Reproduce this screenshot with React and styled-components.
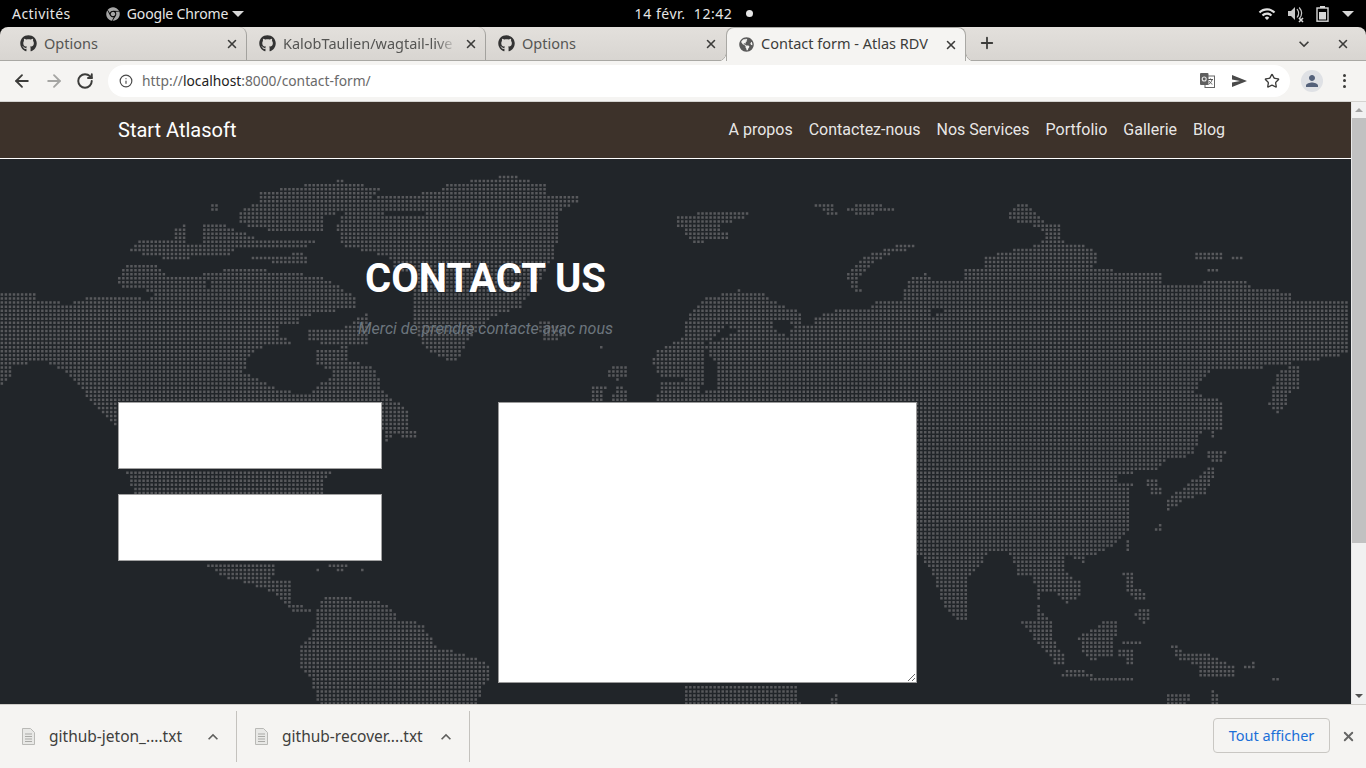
import React, { useMemo } from "react";
import styled, { createGlobalStyle } from "styled-components";
import { FaGithub, FaGlobeAmericas, FaChrome } from "react-icons/fa";
import { MdWifi, MdPerson, MdKeyboardArrowDown, MdKeyboardArrowUp } from "react-icons/md";
import { ArrowLeft, ArrowRight, RotateCw, Info, Star, X, Plus } from "lucide-react";

const GlobalStyle = createGlobalStyle`
  html, body {
    margin: 0;
    height: 100%;
    overflow: hidden;
    background: #000;
  }
  * { box-sizing: border-box; }
`;

const uiFont = `"Noto Sans", "Open Sans", sans-serif`;
const pageFont = `Roboto, "Liberation Sans", sans-serif`;

/* ---------- desktop bar ---------- */

const Screen = styled.div`
  width: 1366px;
  height: 768px;
  display: flex;
  flex-direction: column;
  font-family: ${uiFont};
`;

const TopBar = styled.div`
  height: 27px;
  flex: none;
  background: #000;
  color: #e6e6e6;
  font-size: 14px;
  display: grid;
  grid-template-columns: 1fr auto 1fr;
  align-items: center;
  padding: 0 12px;
`;

const TopLeft = styled.div`
  display: flex;
  align-items: center;
`;

const Activities = styled.span`
  letter-spacing: 0.45px;
`;

const AppName = styled.div`
  display: flex;
  align-items: center;
  gap: 7px;
  margin-left: 35px;
  letter-spacing: -0.15px;
`;

const Caret = styled.span`
  width: 0;
  height: 0;
  border-left: 6px solid transparent;
  border-right: 6px solid transparent;
  border-top: 6px solid #d8d8d8;
  margin-left: ${(p) => p.$gap || 0}px;
`;

const Clock = styled.div`
  display: flex;
  align-items: center;
  margin-left: 22px;
  gap: 14px;
  letter-spacing: 0.55px;
`;

const ClockDot = styled.span`
  width: 7px;
  height: 7px;
  border-radius: 50%;
  background: #e6e6e6;
`;

const TopRight = styled.div`
  display: flex;
  align-items: center;
  justify-content: flex-end;
  gap: 11px;
`;

/* ---------- chrome tabs ---------- */

const TabStrip = styled.div`
  height: 34px;
  flex: none;
  position: relative;
  display: flex;
  padding-left: 8px;
  background: linear-gradient(#e3e0dc, #d8d5d1);
  border-bottom: 1px solid #a9a8a4;
  border-radius: 8px 8px 0 0;
  color: #4a4a48;
  font-size: 14.5px;
`;

const Tab = styled.div`
  width: ${(p) => (p.$active ? 240 : 239)}px;
  height: ${(p) => (p.$active ? 34 : 33)}px;
  position: relative;
  display: flex;
  align-items: center;
  padding: 0 7px 0 12px;
  gap: 7px;
  color: ${(p) => (p.$active ? "#3c3c3a" : "#555553")};
  background: ${(p) => (p.$active ? "#f5f4f2" : "transparent")};
  border-radius: 8px 8px 0 0;
  border: ${(p) => (p.$active ? "1px solid #a9a8a4" : "none")};
  border-bottom: none;
  border-right: ${(p) =>
    p.$active ? "1px solid #a9a8a4" : p.$sep ? "1px solid #a3a29e" : "none"};
  margin-left: ${(p) => (p.$active ? 1 : 0)}px;

  ${(p) =>
    p.$active &&
    `
    &::before, &::after {
      content: "";
      position: absolute;
      bottom: 0;
      width: 8px;
      height: 8px;
    }
    &::before {
      left: -9px;
      background: radial-gradient(circle at 0 0, transparent 7.5px, #a9a8a4 8px, #f5f4f2 8.6px);
    }
    &::after {
      right: -9px;
      background: radial-gradient(circle at 100% 0, transparent 7.5px, #a9a8a4 8px, #f5f4f2 8.6px);
    }
  `}
`;

const TabTitle = styled.span`
  flex: 1;
  min-width: 0;
  padding-bottom: ${(p) => (p.$raised ? 4 : 2)}px;
  white-space: nowrap;
  overflow: hidden;
  -webkit-mask-image: ${(p) =>
    p.$fade ? "linear-gradient(to right, #000 88%, transparent 100%)" : "none"};
`;

const TabClose = styled(X)`
  flex: none;
  width: 14px;
  height: 14px;
  color: #3c3c3a;
  stroke-width: 2.6;
`;

const NewTab = styled(Plus)`
  width: 18px;
  height: 18px;
  margin: 7px 0 0 12px;
  color: #3c3c3a;
  stroke-width: 2.4;
`;

const StripRight = styled.div`
  margin-left: auto;
  display: flex;
  align-items: center;
  gap: 22px;
  padding-right: 16px;
  color: #3c3c3a;
`;

/* ---------- toolbar ---------- */

const Toolbar = styled.div`
  height: 41px;
  flex: none;
  display: flex;
  align-items: center;
  background: #f5f4f2;
  border-bottom: 1px solid #d4d3d0;
  padding: 0 0 1px 12px;
`;

const NavButtons = styled.div`
  display: flex;
  align-items: center;
  gap: 12px;
  width: 96px;
`;

const UrlBar = styled.div`
  width: 1182px;
  height: 32px;
  border-radius: 16px;
  background: #fff;
  display: flex;
  align-items: center;
  padding: 0 10px 0 11px;
  font-size: 13.8px;
  color: #6a6a6a;
`;

const UrlText = styled.span`
  margin-left: 9px;
  flex: 1;
  b {
    font-weight: 400;
    color: #222;
  }
`;

const UrlActions = styled.div`
  display: flex;
  align-items: center;
  gap: 17px;
  color: #4a4a4a;
`;

const Avatar = styled.div`
  width: 22px;
  height: 22px;
  margin-left: 11px;
  border-radius: 50%;
  background: #dfe1e5;
  color: #54617a;
  display: flex;
  align-items: center;
  justify-content: center;
`;

const Kebab = styled.div`
  margin-left: 20px;
  display: flex;
  flex-direction: column;
  gap: 2.5px;
  span {
    width: 3px;
    height: 3px;
    border-radius: 50%;
    background: #3c3c3a;
  }
`;

/* ---------- web page ---------- */

const Viewport = styled.div`
  flex: 1;
  min-height: 0;
  display: flex;
`;

const Page = styled.div`
  flex: 1;
  min-width: 0;
  display: flex;
  flex-direction: column;
  font-family: ${pageFont};
`;

const Navbar = styled.nav`
  height: 57px;
  flex: none;
  display: flex;
  align-items: center;
  justify-content: space-between;
  padding: 0 126px 0 118px;
  background: #3d322a;
  border-bottom: 1px solid #fff;
  color: #fff;
`;

const Brand = styled.div`
  font-size: 20px;
`;

const NavLinks = styled.div`
  display: flex;
  gap: 16px;
  padding-bottom: 2px;
  font-size: 16px;
  color: rgba(255, 255, 255, 0.9);
`;

const Hero = styled.section`
  flex: 1;
  min-height: 0;
  position: relative;
  overflow: hidden;
  background: #212529;
  padding: 0 0 0 118px;
`;

const MapLayer = styled.svg`
  position: absolute;
  left: 0;
  top: 0;
  width: 1351px;
  height: 545px;
`;

const Heading = styled.div`
  position: relative;
  width: 735px;
  padding-top: 96px;
  text-align: center;
`;

const Title = styled.h1`
  margin: 0;
  font-size: 40px;
  line-height: 48px;
  font-weight: 700;
  color: #fff;
`;

const Subtitle = styled.p`
  margin: 14px 0 0;
  font-size: 16px;
  line-height: 24px;
  font-style: italic;
  color: #6c757d;
`;

const FormGrid = styled.form`
  position: relative;
  margin-top: 61px;
  display: grid;
  grid-template-columns: 264px 419px;
  column-gap: 116px;
`;

const Fields = styled.div`
  display: flex;
  flex-direction: column;
  gap: 25px;
`;

const Field = styled.input`
  display: block;
  width: 264px;
  height: 67px;
  border: 1px solid #a2a2a2;
  background: #fff;
  outline: none;
`;

const Message = styled.textarea`
  display: block;
  width: 419px;
  height: 281px;
  border: 1px solid #9a9a9a;
  background: #fff;
  outline: none;
`;

/* ---------- scrollbar ---------- */

const Scrollbar = styled.div`
  width: 15px;
  flex: none;
  display: flex;
  flex-direction: column;
  background: #f1f1f1;
  border-left: 1px solid #e8e8e8;
`;

const ScrollArrow = styled.div`
  height: 16px;
  flex: none;
  display: flex;
  align-items: center;
  justify-content: center;
  span {
    width: 0;
    height: 0;
    border-left: 4px solid transparent;
    border-right: 4px solid transparent;
    ${(p) => (p.$down ? "border-top: 4px solid #505050;" : "border-bottom: 4px solid #a3a3a3;")}
  }
`;

const ScrollThumb = styled.div`
  height: 425px;
  background: #c1c1c1;
`;

const ScrollTrack = styled.div`
  flex: 1;
`;

/* ---------- downloads ---------- */

const DownloadBar = styled.div`
  height: 64px;
  flex: none;
  display: flex;
  align-items: center;
  background: #f5f4f2;
  border-top: 1px solid #cfcdc9;
  color: #3f3f3d;
  font-size: 15.5px;
`;

const DownloadItem = styled.div`
  width: ${(p) => p.$width}px;
  height: 51px;
  display: flex;
  align-items: center;
  padding-left: ${(p) => p.$pad}px;
  border-right: 1px solid #c4c2be;
`;

const FileName = styled.span`
  margin-left: 14px;
  padding-bottom: 2px;
  flex: 1;
`;

const Chevron = styled(MdKeyboardArrowUp)`
  margin-right: 13px;
  color: #5f5f5d;
`;

const ShowAll = styled.button`
  margin: -2px 0 0 auto;
  width: 117px;
  height: 35px;
  padding: 0 0 2px;
  border: 1px solid #c9c7c3;
  border-radius: 4px;
  background: transparent;
  color: #1a6fd8;
  font-family: ${uiFont};
  font-size: 14.5px;
`;

const BarClose = styled(X)`
  margin: 0 10px 0 11px;
  width: 15px;
  height: 15px;
  color: #666;
  stroke-width: 3;
`;

/* ---------- small drawings ---------- */

const FileIcon = () => (
  <svg width="13" height="17" viewBox="0 0 13 17">
    <path d="M.5.5h8l4 4v12H.5z" fill="#e8e8e6" stroke="#b9b9b6" />
    <path d="M3 6h7M3 8.5h7M3 11h7M3 13.5h7" stroke="#a9a9a6" />
  </svg>
);

const MuteIcon = () => (
  <svg width="18" height="18" viewBox="0 0 18 18" fill="none">
    <path d="M1 6h3l4-4v13l-4-4H1z" fill="#c8c8c8" />
    <path d="M10 4c2 2.5 2 6 0 8.5M12.2 2.5c3 3.5 3 8 0 11.5" stroke="#c8c8c8" strokeWidth="1.2" />
    <path d="M12 13l4 4M16 13l-4 4" stroke="#d8d8d8" strokeWidth="1.6" />
  </svg>
);

const BatteryIcon = () => (
  <svg width="13" height="16" viewBox="0 0 13 16" fill="none">
    <path d="M4 0h5v2H4z" fill="#d8d8d8" />
    <rect x="1" y="2" width="11" height="13.2" stroke="#d8d8d8" strokeWidth="1.4" />
    <rect x="3" y="6" width="7" height="7.5" fill="#d8d8d8" />
  </svg>
);

const TranslateIcon = () => (
  <svg width="15" height="15" viewBox="0 0 15 15">
    <rect x="5" y="3" width="9.5" height="11.5" fill="#fff" stroke="#666" />
    <path d="M8 6.5h5M10.5 5.5v1M12 7c-1 2.5-2 3.5-3.5 4.5M9.2 8.2c1 1.5 2 2.5 3.2 3" stroke="#555" fill="none" />
    <rect x="0" y="0" width="8.5" height="12" rx="1" fill="#5f5f5f" />
    <circle cx="4.2" cy="6" r="2" fill="none" stroke="#e8e8e8" strokeWidth="1.1" />
  </svg>
);

const SendIcon = () => (
  <svg width="15" height="12" viewBox="0 0 15 12">
    <path d="M0 0l15 6-15 6V7.5L8 6 0 4.5z" fill="#4a4a4a" />
  </svg>
);

/* ---------- dotted world map ---------- */

const toPage = (ox, oy) => (pts) => pts.map(([x, y]) => [ox + x / 2.296, oy - 159 + y / 3]);

const topLeft = toPage(0, 160);
const topRight = toPage(683, 160);
const bottomLeft = toPage(0, 430);
const bottomRight = toPage(683, 430);

const land = [
  // greenland
  topLeft([[770,195],[810,130],[870,110],[885,100],[970,100],[975,88],[1010,88],[1020,75],[1085,62],[1160,48],[1185,48],[1215,62],[1260,75],[1250,100],[1333,110],[1333,128],[1290,140],[1280,175],[1278,255],[1270,290],[1250,340],[1225,385],[1195,440],[1135,465],[1085,520],[1065,560],[1050,605],[1030,605],[970,560],[950,480],[945,420],[945,340],[900,325],[895,295],[830,270],[790,265]]),
  // arctic canada
  topLeft([[590,100],[640,88],[690,75],[770,62],[790,62],[875,88],[835,130],[745,170],[745,210],[640,215],[545,190],[545,160],[590,125]]),
  topLeft([[485,135],[505,135],[505,155],[485,155]]),
  topLeft([[460,250],[465,190],[495,185],[545,210],[600,240],[725,245],[690,265],[540,265],[530,285],[450,285],[430,300],[340,290],[298,270],[325,235],[370,235],[395,240],[400,200],[428,195],[425,245]]),
  topLeft([[580,285],[700,280],[705,315],[580,300]]),
  // north america
  topLeft([[0,392],[80,402],[85,418],[160,430],[180,420],[215,405],[285,405],[345,420],[350,395],[275,378],[270,350],[285,320],[280,310],[365,315],[370,340],[420,350],[480,340],[535,320],[610,318],[610,330],[720,345],[770,370],[815,410],[820,440],[690,470],[690,490],[640,495],[640,530],[690,545],[640,555],[600,560],[590,570],[565,600],[560,640],[600,660],[620,680],[660,690],[680,700],[705,700],[770,640],[720,610],[720,570],[780,560],[705,540],[705,510],[780,510],[845,455],[850,560],[800,560],[800,600],[860,625],[880,690],[905,720],[935,745],[935,810],[270,810],[240,770],[200,720],[185,680],[155,640],[100,605],[55,610],[25,615],[25,650],[0,680]]),
  bottomLeft([[895,0],[960,0],[960,30],[905,15],[890,25],[885,50],[878,50],[878,0]]),
  bottomLeft([[290,119],[765,119],[745,150],[745,190],[310,190],[298,160]]),
  bottomLeft([[466,398],[635,398],[625,445],[668,448],[670,495],[660,510],[680,525],[720,535],[715,552],[665,542],[645,510],[635,490],[605,475],[580,465],[555,455],[515,440],[490,420]]),
  bottomLeft([[720,410],[738,410],[738,420],[720,420]]),
  bottomLeft([[755,398],[800,398],[800,408],[755,408]]),
  bottomLeft([[775,410],[792,410],[792,420],[775,420]]),
  bottomLeft([[822,410],[840,410],[840,420],[822,420]]),
  // south america
  bottomLeft([[745,498],[810,498],[810,510],[865,510],[885,522],[905,548],[915,570],[950,572],[970,585],[990,625],[1000,650],[1035,656],[1055,670],[1090,680],[1120,705],[1130,745],[1110,770],[1100,800],[1090,830],[740,830],[720,790],[718,745],[690,710],[682,695],[692,645],[710,620],[730,570],[722,550],[735,525]]),
  // iceland, uk, west of europe
  topLeft([[1230,490],[1260,480],[1300,525],[1270,548],[1250,540]]),
  topLeft([[1372,550],[1382,550],[1382,572],[1372,572]]),
  topLeft([[1456,588],[1464,588],[1464,596],[1456,596]]),
  topLeft([[1420,612],[1435,612],[1445,650],[1415,660],[1392,650],[1395,630]]),
  topLeft([[1360,670],[1390,675],[1385,725],[1355,725]]),
  topLeft([[1410,680],[1435,680],[1445,725],[1405,725]]),
  topLeft([[1510,570],[1568,530],[1568,650],[1520,650],[1495,610]]),
  topLeft([[1520,665],[1550,660],[1568,670],[1568,725],[1505,725]]),
  topLeft([[1550,165],[1568,160],[1568,200],[1552,200]]),
  // svalbard and friends
  topRight([[0,175],[30,160],[50,148],[110,148],[148,160],[130,180],[85,190],[85,205],[110,225],[100,240],[50,240],[45,255],[30,255],[10,240],[0,205]]),
  topRight([[300,135],[345,135],[345,150],[365,165],[335,168],[320,150]]),
  topRight([[375,150],[405,125],[438,125],[495,150],[440,155],[435,168],[405,168]]),
  topRight([[375,345],[395,320],[420,285],[470,265],[505,245],[532,245],[530,265],[480,280],[450,300],[425,320],[405,350],[400,375],[420,395],[400,400],[385,385]]),
  topRight([[750,150],[780,125],[800,150],[830,185],[875,200],[815,200],[795,195],[750,180]]),
  topRight([[1170,270],[1235,270],[1240,300],[1170,300]]),
  topRight([[1250,285],[1280,285],[1295,300],[1260,300]]),
  topRight([[1198,320],[1225,322],[1230,340],[1205,340]]),
  // russia and asia, top half
  topRight([[0,490],[20,450],[45,415],[85,405],[120,390],[175,392],[220,430],[270,455],[270,490],[295,490],[300,470],[350,450],[430,440],[445,415],[505,415],[510,380],[530,345],[560,340],[575,360],[640,365],[640,320],[690,320],[690,295],[750,270],[815,255],[835,225],[815,200],[875,200],[860,225],[885,250],[945,260],[950,310],[930,325],[1100,340],[1105,375],[1200,378],[1195,365],[1280,355],[1305,378],[1390,395],[1400,415],[1532,415],[1532,570],[1500,590],[1340,620],[1300,625],[1220,625],[1190,660],[1170,700],[1235,720],[1240,812],[0,812]]),
  topRight([[1350,690],[1365,640],[1400,610],[1420,625],[1415,680],[1385,700],[1390,730],[1360,765],[1345,730]]),
  // asia, bottom half
  bottomRight([[0,0],[1190,0],[1185,40],[1165,75],[1100,95],[1090,120],[1010,130],[990,150],[1035,165],[1025,180],[1025,290],[1005,325],[980,355],[950,370],[925,375],[920,400],[880,375],[875,420],[915,460],[915,495],[880,520],[860,490],[825,490],[825,520],[810,510],[805,440],[770,440],[750,370],[700,365],[690,400],[650,440],[655,565],[630,565],[610,540],[600,530],[580,460],[570,420],[545,380],[0,380]]),
  bottomRight([[1215,0],[1222,0],[1222,30],[1215,30]]),
  bottomRight([[1205,60],[1250,60],[1245,75],[1230,100],[1200,85]]),
  bottomRight([[1200,105],[1220,105],[1222,135],[1210,145],[1212,160],[1200,190],[1145,210],[1110,250],[1105,220],[1125,190],[1150,170],[1170,150],[1195,125]]),
  bottomRight([[1060,145],[1090,150],[1100,185],[1090,200],[1075,195]]),
  bottomRight([[1095,280],[1102,280],[1100,295],[1085,310],[1078,322],[1075,315]]),
  bottomRight([[1015,325],[1027,325],[1027,370],[1018,360]]),
  bottomRight([[1010,420],[1035,425],[1035,470],[1060,485],[1062,505],[1040,515],[1015,480]]),
  bottomRight([[1030,545],[1070,530],[1075,555],[1060,580],[1050,570]]),
  bottomRight([[810,515],[825,545],[850,575],[850,615],[855,640],[878,680],[878,710],[860,708],[825,660],[805,625],[795,600],[775,575],[795,570],[815,570]]),
  bottomRight([[965,572],[1000,572],[990,640],[985,680],[935,690],[915,660],[908,620],[930,605]]),
  bottomRight([[1010,632],[1055,632],[1058,640],[1010,640]]),
  bottomRight([[1000,660],[1035,655],[1035,700],[1005,712],[1020,680],[995,675]]),
  bottomRight([[1115,645],[1140,645],[1145,670],[1200,668],[1240,695],[1270,715],[1260,745],[1180,745],[1180,700],[1140,695],[1130,670]]),
  bottomRight([[870,730],[885,718],[905,718],[940,730],[940,740],[1035,742],[1035,750],[935,748],[870,738]]),
  bottomRight([[1105,790],[1165,790],[1155,830],[1105,830]]),
  bottomRight([[1215,770],[1232,800],[1232,830],[1215,830]]),
  bottomRight([[1285,705],[1315,695],[1310,712],[1285,712]]),
  bottomRight([[1355,742],[1370,742],[1370,748],[1355,748]]),
  bottomRight([[0,762],[260,762],[270,830],[0,830]]),
  bottomRight([[345,790],[355,790],[355,830],[330,830]]),
];

const seas = [
  topRight([[45,550],[70,545],[125,510],[100,498],[70,530],[45,560],[50,650],[40,700],[80,680],[75,610]]),
  topRight([[205,480],[260,490],[240,525],[210,510]]),
  topRight([[100,610],[150,610],[150,620],[100,620]]),
  topRight([[560,480],[575,440],[610,440],[570,470]]),
  // straits through the canadian islands, kept thin
  topLeft([[400,340],[420,340],[420,350],[400,350]]),
  topLeft([[600,330],[606,330],[606,400],[600,400]]),
  topLeft([[470,345],[476,345],[486,400],[480,400]]),
  topLeft([[880,160],[1000,150],[1000,158],[880,168]]),
];

const inside = (poly, x, y) => {
  let hit = false;
  for (let i = 0, j = poly.length - 1; i < poly.length; j = i++) {
    const [xi, yi] = poly[i];
    const [xj, yj] = poly[j];
    if (yi > y !== yj > y && x < ((xj - xi) * (y - yi)) / (yj - yi) + xi) hit = !hit;
  }
  return hit;
};

const PITCH = 4.05;

function DotMap() {
  const dots = useMemo(() => {
    let d = "";
    for (let row = 0; row * PITCH < 545; row++) {
      for (let col = 0; col * PITCH < 1351; col++) {
        const x = col * PITCH + 0.6;
        const y = row * PITCH + 0.6;
        if (land.some((p) => inside(p, x + 1, y + 1)) && !seas.some((p) => inside(p, x + 1, y + 1))) {
          d += `M${x.toFixed(2)} ${y.toFixed(2)}h2.5v2.5h-2.5z`;
        }
      }
    }
    return d;
  }, []);

  return (
    <MapLayer viewBox="0 0 1351 545">
      <path d={dots} fill="#58595c" />
    </MapLayer>
  );
}

const tabs = [
  { title: "Options", sep: true },
  { title: "KalobTaulien/wagtail-live", sep: true, fade: true },
  { title: "Options" },
];

const links = ["A propos", "Contactez-nous", "Nos Services", "Portfolio", "Gallerie", "Blog"];

export default function App() {
  return (
    <Screen>
      <GlobalStyle />
      <TopBar>
        <TopLeft>
          <Activities>Activités</Activities>
          <AppName>
            <FaChrome size={14} color="#a5a5a5" />
            Google Chrome
            <Caret $gap={-3} />
          </AppName>
        </TopLeft>
        <Clock>
          <span>14 févr.&nbsp; 12:42</span>
          <ClockDot />
        </Clock>
        <TopRight>
          <MdWifi size={18} color="#e0e0e0" />
          <MuteIcon />
          <BatteryIcon />
          <Caret $gap={2} />
        </TopRight>
      </TopBar>

      <TabStrip>
        {tabs.map((t, i) => (
          <Tab key={i} $sep={t.sep}>
            <FaGithub size={17} color="#333" />
            <TabTitle $fade={t.fade}>{t.title}</TabTitle>
            <TabClose />
          </Tab>
        ))}
        <Tab $active>
          <FaGlobeAmericas size={15} color="#5a5a5a" />
          <TabTitle $raised>Contact form - Atlas RDV</TabTitle>
          <TabClose />
        </Tab>
        <NewTab />
        <StripRight>
          <MdKeyboardArrowDown size={20} />
          <TabClose />
        </StripRight>
      </TabStrip>

      <Toolbar>
        <NavButtons>
          <ArrowLeft size={20} color="#3c3c3a" strokeWidth={2.2} />
          <ArrowRight size={20} color="#a5a5a3" strokeWidth={2.2} />
          <RotateCw size={18} color="#3c3c3a" strokeWidth={2.6} />
        </NavButtons>
        <UrlBar>
          <Info size={14} color="#4a4a4a" />
          <UrlText>
            http://<b>localhost</b>:8000/contact-form/
          </UrlText>
          <UrlActions>
            <TranslateIcon />
            <SendIcon />
            <Star size={16} color="#3c3c3a" strokeWidth={2} />
          </UrlActions>
        </UrlBar>
        <Avatar>
          <MdPerson size={18} />
        </Avatar>
        <Kebab>
          <span />
          <span />
          <span />
        </Kebab>
      </Toolbar>

      <Viewport>
        <Page>
          <Navbar>
            <Brand>Start Atlasoft</Brand>
            <NavLinks>
              {links.map((l) => (
                <span key={l}>{l}</span>
              ))}
            </NavLinks>
          </Navbar>
          <Hero>
            <DotMap />
            <Heading>
              <Title>CONTACT US</Title>
              <Subtitle>Merci de prendre contacte avac nous</Subtitle>
            </Heading>
            <FormGrid>
              <Fields>
                <Field />
                <Field />
              </Fields>
              <Message />
            </FormGrid>
          </Hero>
        </Page>
        <Scrollbar>
          <ScrollArrow>
            <span />
          </ScrollArrow>
          <ScrollThumb />
          <ScrollTrack />
          <ScrollArrow $down>
            <span />
          </ScrollArrow>
        </Scrollbar>
      </Viewport>

      <DownloadBar>
        <DownloadItem $width={237} $pad={22}>
          <FileIcon />
          <FileName>github-jeton_....txt</FileName>
          <Chevron size={20} />
        </DownloadItem>
        <DownloadItem $width={233} $pad={18}>
          <FileIcon />
          <FileName>github-recover....txt</FileName>
          <Chevron size={20} />
        </DownloadItem>
        <ShowAll type="button">Tout afficher</ShowAll>
        <BarClose />
      </DownloadBar>
    </Screen>
  );
}
